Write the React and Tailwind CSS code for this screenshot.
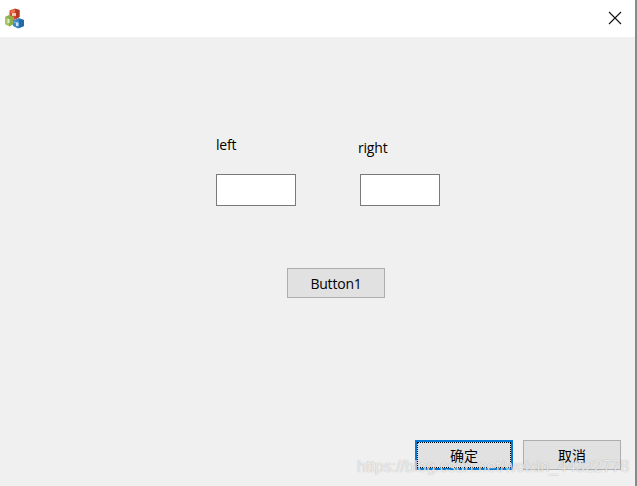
export default function App() {
  const font = { fontFamily: '"Open Sans","Noto Sans","Noto Sans CJK SC",sans-serif' };
  return (
    <div className="relative w-[637px] h-[486px] flex flex-col overflow-hidden bg-[#f0f0f0] border-r-2 border-[#8a8a8a] text-[14px] text-black" style={font}>
      <div className="h-[37px] shrink-0 bg-white flex items-center justify-between pl-[4px] pr-[13px]">
        <svg width="21" height="21" viewBox="0 0 21 21" className="mt-[-1px]">
          <path d="M5.5 2.5 L11 .5 L15.5 2 L15.5 9 L10 12 L5.5 9.5 Z" fill="#d8472c" />
          <path d="M11 1 L15.5 2 L15.5 9 L12 11 Z" fill="#b33a22" />
          <path d="M6.5 3 L11 1.5 L11 4 L7 5 Z" fill="#ea7a55" />
          <path d="M1 9 L5 7 L10 9 L10 16 L5.5 18.5 L1 16 Z" fill="#8bb04a" />
          <path d="M1 9 L5 10.5 L5 18 L1 16 Z" fill="#a6c566" />
          <path d="M9 12.5 L15 10 L20 12 L20 18 L14 20.5 L9 18 Z" fill="#3a86c8" />
          <path d="M15 11 L20 12 L20 18 L15 20 Z" fill="#236aa8" />
          <path d="M9.5 13 L14 14.5 L14 16 L9.5 15 Z" fill="#6aaee0" />
          <rect x="8" y="5" width="4" height="3" fill="#f4c9b2" />
          <rect x="12" y="14.5" width="2.5" height="3.5" fill="#c6e0f4" />
          <rect x="3.5" y="11" width="2" height="4" fill="#e4efc4" />
        </svg>
        <svg width="14" height="14" viewBox="0 0 14 14" fill="none" stroke="#111" strokeWidth="1.1" className="mt-[-1px]">
          <path d="M1 1 L13 13 M13 1 L1 13" />
        </svg>
      </div>

      <div className="flex-1 flex flex-col">
        <div className="flex pt-[98px] pl-[216px] h-[170px] tracking-[-0.2px]">
          <div className="w-[142px] flex flex-col">
            <span className="h-[20px] leading-[20px]">left</span>
            <div className="mt-[19px] w-[80px] h-[32px] bg-white border border-[#7a7a7a]" />
          </div>
          <div className="flex flex-col">
            <span className="mt-[3px] h-[20px] leading-[20px]">right</span>
            <div className="mt-[16px] ml-[2px] w-[80px] h-[32px] bg-white border border-[#7a7a7a]" />
          </div>
        </div>

        <div className="pl-[287px] mt-[61px]">
          <button className="w-[98px] h-[30px] bg-[#e1e1e1] border border-[#adadad] flex items-center justify-center tracking-[-0.2px]">Button1</button>
        </div>

        <div className="mt-auto flex justify-end gap-[10px] pr-[14px] pb-[16px]">
          <button className="w-[98px] h-[30px] bg-[#e1e1e1] border-2 border-[#0078d7] flex items-center justify-center outline-1 outline-dotted outline-black outline-offset-[-3px]" style={{ fontFamily: '"Noto Sans CJK SC",sans-serif' }}>确定</button>
          <button className="w-[98px] h-[30px] bg-[#e1e1e1] border border-[#adadad] flex items-center justify-center" style={{ fontFamily: '"Noto Sans CJK SC",sans-serif' }}>取消</button>
        </div>
      </div>

      <span className="absolute left-[357px] top-[457px] text-[16px] leading-[20px] whitespace-nowrap text-white/75 [text-shadow:0_0_1px_rgba(110,110,110,0.6)]" style={{ fontFamily: '"Liberation Sans",sans-serif' }}>https://blog.csdn.net/weixin_44322778</span>
    </div>
  );
}
